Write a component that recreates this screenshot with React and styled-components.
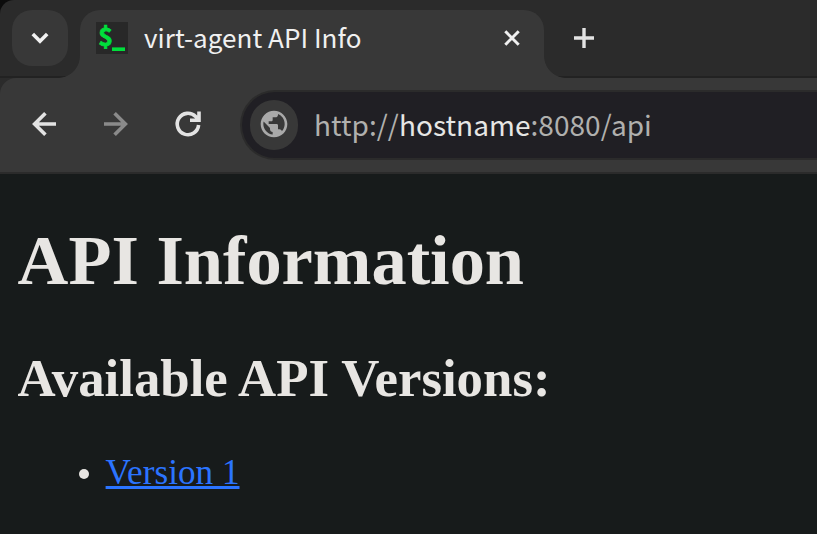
import React from "react";
import styled, { createGlobalStyle } from "styled-components";

const uiFont = '"Noto Sans CJK JP", "Noto Sans", sans-serif';

const GlobalStyle = createGlobalStyle`
  *, *::before, *::after { box-sizing: border-box; }
  body { margin: 0; background: #171b1b; overflow: hidden; }
`;

const Window = styled.div`
  display: flex;
  flex-direction: column;
  width: 817px;
  height: 534px;
  background: #171b1b;
  overflow: hidden;
`;

const Chrome = styled.header`
  display: flex;
  flex-direction: column;
  flex: none;
  background: #0c0c0c;
`;

const TabStrip = styled.div`
  display: flex;
  align-items: flex-start;
  height: 78px;
  padding: 10px 0 0 12px;
  background: #2b2b2b;
  border-top-left-radius: 14px;
  border-bottom: 2px solid #222222;
  font-family: ${uiFont};
`;

const TabSearchButton = styled.button`
  display: flex;
  align-items: center;
  justify-content: center;
  width: 56px;
  height: 56px;
  margin: 0 12px 0 0;
  padding: 0;
  border: 0;
  border-radius: 20px;
  background: #383838;
`;

const Tab = styled.div`
  position: relative;
  display: flex;
  align-items: flex-start;
  width: 464px;
  height: 68px;
  padding: 12px 20px 0 16px;
  border-radius: 20px 20px 0 0;
  background: #383838;

  &::before,
  &::after {
    content: "";
    position: absolute;
    bottom: 0;
    width: 22px;
    height: 22px;
  }
  &::before {
    right: 100%;
    background: radial-gradient(circle at 0 0, transparent 21.5px, #383838 22.3px);
  }
  &::after {
    left: 100%;
    background: radial-gradient(circle at 100% 0, transparent 21.5px, #383838 22.3px);
  }
`;

const Favicon = styled.svg`
  flex: none;
  width: 32px;
  height: 32px;
  margin-right: 16px;
  overflow: visible;
`;

const Prompt = styled.text`
  font: 700 25px/1 ${uiFont};
  fill: #00df3c;
  stroke: #00df3c;
  stroke-width: 0.7px;
`;

const TabTitle = styled.span`
  flex: 1;
  font-size: 26px;
  line-height: 30px;
  letter-spacing: 0.04px;
  color: #f0f0f0;
  white-space: nowrap;
`;

const Icon = styled.svg`
  display: block;
  flex: none;
  width: ${(p) => p.$size}px;
  height: ${(p) => p.$size}px;
  fill: none;
  stroke: ${(p) => p.$color || "#e3e3e3"};
  stroke-width: ${(p) => p.$weight || 3.6};
`;

const IconButton = styled.button`
  display: flex;
  align-items: center;
  justify-content: center;
  flex: none;
  width: ${(p) => p.$size}px;
  height: ${(p) => p.$size}px;
  padding: 0;
  border: 0;
  background: transparent;
`;

const CloseButton = styled(IconButton)`
  margin-top: 4px;
`;

const NewTabButton = styled(IconButton)`
  margin-left: 12px;
`;

const ToolbarBack = styled.div`
  background: #2b2b2b;
`;

const Toolbar = styled.nav`
  display: flex;
  align-items: flex-start;
  height: 96px;
  padding: 10px 0 0 8px;
  border-top-left-radius: 16px;
  border-bottom: 2px solid #2b2b2b;
  background: #383838;
`;

const NavButtons = styled.div`
  display: flex;
  flex: none;
  width: 232px;
`;

const AddressBar = styled.div`
  display: flex;
  align-items: center;
  flex: 1;
  height: 70px;
  margin-top: 2px;
  padding-left: 8px;
  border: 2px solid #2b2b2b;
  border-right: 0;
  border-radius: 35px 0 0 35px;
  background: #201f24;
`;

const SiteInfo = styled.span`
  display: flex;
  justify-content: center;
  flex: none;
  width: 48px;
  height: 50px;
  padding-top: 8px;
  border-radius: 25px;
  background: #383838;
`;

const Url = styled.span`
  margin: 0 0 2px 16px;
  font: 400 28px/50px ${uiFont};
  letter-spacing: 0.04px;
  color: #b0b0ae;
  white-space: nowrap;
`;

const Host = styled.span`
  color: #e6e6e4;
`;

const Page = styled.main`
  display: flow-root;
  flex: 1;
  padding: 0 17.6px;
  font: 35.2px "Liberation Serif", serif;
  color: #e8e6e3;
`;

const Title = styled.h1`
  margin: 46.2px 0 47.2px;
  font-size: 2em;
`;

const Subtitle = styled.h2`
  margin: 0.83em 0;
  font-size: 1.5em;
`;

const VersionList = styled.ul`
  margin: 44.7px 0 0;
  padding-left: 88px;
`;

const VersionLink = styled.a`
  color: #2b74ff;
  text-decoration-thickness: 3px;
  text-underline-offset: 2px;
`;

export default function App() {
  return (
    <>
      <GlobalStyle />
      <Window>
        <Chrome>
          <TabStrip>
            <TabSearchButton aria-label="Search tabs">
              <Icon $size={24} viewBox="0 0 24 24" $color="#f2f2f2">
                <path d="M4.8 8 12 15.2 19.2 8" />
              </Icon>
            </TabSearchButton>
            <Tab>
              <Favicon viewBox="0 0 32 32">
                <rect width="32" height="32" fill="#282828" />
                <Prompt x="2.2" y="24.2">$</Prompt>
                <rect x="16" y="25.4" width="13" height="3.6" fill="#00df3c" />
              </Favicon>
              <TabTitle>virt-agent API Info</TabTitle>
              <CloseButton $size={24} aria-label="Close tab">
                <Icon $size={24} viewBox="0 0 24 24" $color="#f0f0f0" $weight={3}>
                  <path d="M5.3 5.3 18.7 18.7M18.7 5.3 5.3 18.7" />
                </Icon>
              </CloseButton>
            </Tab>
            <NewTabButton $size={56} aria-label="New tab">
              <Icon $size={24} viewBox="0 0 24 24" $weight={3.4}>
                <path d="M2 12H22M12 2V22" />
              </Icon>
            </NewTabButton>
          </TabStrip>
          <ToolbarBack>
            <Toolbar>
              <NavButtons>
                <IconButton $size={72} aria-label="Back">
                  <Icon $size={28} viewBox="0 0 28 28">
                    <path d="M26 14H5M15.4 3.2 4.6 14 15.4 24.8" />
                  </Icon>
                </IconButton>
                <IconButton $size={72} aria-label="Forward">
                  <Icon $size={28} viewBox="0 0 28 28" $color="#8a8a8a">
                    <path d="M2 14H23M12.6 3.2 23.4 14 12.6 24.8" />
                  </Icon>
                </IconButton>
                <IconButton $size={72} aria-label="Reload">
                  <Icon $size={28} viewBox="0 0 28 28">
                    <path d="M24.6 15A10.7 10.7 0 1 1 21.6 6.5L24.5 9.5M16 10.3H25V1.5" />
                  </Icon>
                </IconButton>
              </NavButtons>
              <AddressBar>
                <SiteInfo>
                  <Icon $size={32} viewBox="0 0 24 24" $color="none">
                    <path
                      fill="#a9a9a9"
                      d="M12 2C6.48 2 2 6.48 2 12s4.48 10 10 10 10-4.48 10-10S17.52 2 12 2zm-1 17.93c-3.95-.49-7-3.85-7-7.93 0-.62.08-1.21.21-1.79L9 15v1c0 1.1.9 2 2 2v1.93zm6.9-2.54c-.26-.81-1-1.39-1.9-1.39h-1v-3c0-.55-.45-1-1-1H8v-2h2c.55 0 1-.45 1-1V7h2c1.1 0 2-.9 2-2v-.41c2.93 1.19 5 4.06 5 7.41 0 2.08-.8 3.97-2.1 5.39z"
                    />
                  </Icon>
                </SiteInfo>
                <Url>
                  http://<Host>hostname</Host>:8080/api
                </Url>
              </AddressBar>
            </Toolbar>
          </ToolbarBack>
        </Chrome>
        <Page>
          <Title>API Information</Title>
          <Subtitle>Available API Versions:</Subtitle>
          <VersionList>
            <li>
              <VersionLink href="#v1">Version 1</VersionLink>
            </li>
          </VersionList>
        </Page>
      </Window>
    </>
  );
}
